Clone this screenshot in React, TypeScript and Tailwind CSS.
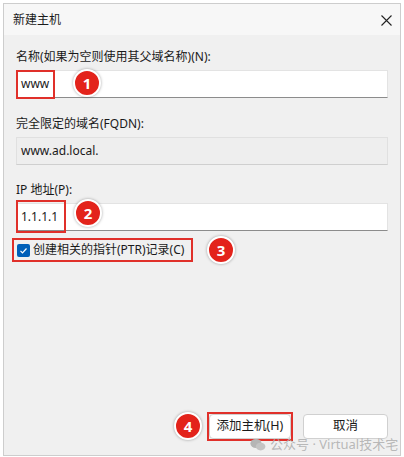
const font = "font-['Noto_Sans','Noto_Sans_CJK_SC',sans-serif]";

function Badge({ n, className }: { n: number; className: string }) {
  return (
    <div
      className={`absolute flex h-[28px] w-[28px] items-center justify-center rounded-full border-2 border-white bg-[#e3231b] text-[15px] font-bold text-white shadow-[0_0_3px_rgba(0,0,0,0.35)] ${className}`}
    >
      {n}
    </div>
  );
}

function Label({ children, className = "" }: { children: React.ReactNode; className?: string }) {
  return <div className={`h-[18px] text-[12px] leading-[18px] text-[#1a1a1a] ${className}`}>{children}</div>;
}

export default function App() {
  return (
    <div className={`h-[457px] w-[404px] bg-white pt-[3px] pl-[3px] ${font}`}>
      <div className="relative flex h-[453px] w-[398px] flex-col border border-[#cdcdcd] bg-[#f0f0f0]">
        {/* title bar */}
        <div className="flex h-[31px] items-center justify-between bg-[#f7f7f7] pl-[9px] pr-[8px]">
          <span className="text-[12px] text-[#1a1a1a]">新建主机</span>
          <svg width="11" height="11" viewBox="0 0 11 11" className="mt-[1px]">
            <path d="M0.5 0.5l10 10M10.5 0.5l-10 10" stroke="#222" strokeWidth="1.1" />
          </svg>
        </div>

        <div className="flex flex-1 flex-col pl-[12px]">
          <Label className="mt-[13px]">名称(如果为空则使用其父域名称)(N):</Label>
          <div className="relative mt-[4px] flex h-[28px] w-[372px] items-center border border-[#e3e3e3] border-b-[#8c8c8c] bg-white pl-[4px] text-[12px] text-[#1a1a1a]">
            www
            <div className="absolute left-[-1px] top-[-1px] h-[29px] w-[39px] border-2 border-[#e0302a]" />
            <Badge n={1} className="left-[56px] top-[-2px]" />
          </div>

          <Label className="mt-[17px]">完全限定的域名(FQDN):</Label>
          <div className="mt-[4px] flex h-[28px] w-[372px] items-center border border-[#e0e0e0] border-b-[#cfcfcf] bg-[#eeeeee] pl-[4px] text-[12px] text-[#1a1a1a]">
            www.ad.local.
          </div>

          <Label className="mt-[16px]">IP 地址(P):</Label>
          <div className="relative mt-[4px] flex h-[28px] w-[372px] items-center border border-[#e3e3e3] border-b-[#8c8c8c] bg-white pl-[4px] text-[12px] text-[#1a1a1a]">
            1.1.1.1
            <div className="absolute left-[-1px] top-[-4px] h-[33px] w-[50px] border-2 border-[#e0302a]" />
            <Badge n={2} className="left-[57px] top-[-5px]" />
          </div>

          <div className="relative mt-[8px] flex h-[22px] items-center">
            <div className="absolute left-[-4px] top-[-1px] h-[24px] w-[181px] border-2 border-[#e0302a]" />
            <div className="ml-[1px] flex h-[13px] w-[13px] items-center justify-center rounded-[2px] bg-[#005fb8]">
              <svg width="9" height="9" viewBox="0 0 9 9">
                <path d="M1.5 4.8l2 2 4-4.3" stroke="white" strokeWidth="1.2" fill="none" />
              </svg>
            </div>
            <span className="ml-[3px] text-[12px] text-[#1a1a1a]">创建相关的指针(PTR)记录(C)</span>
            <Badge n={3} className="left-[191px] top-[-3px]" />
          </div>

          <div className="flex-1" />

          <div className="relative mb-[16px] flex items-center pl-[193px]">
            <Badge n={4} className="left-[158px] top-[-2px]" />
            <div className="relative flex h-[25px] w-[82px] items-center justify-center rounded-[4px] border border-[#d0d0d0] bg-white text-[12.5px] text-[#1a1a1a]">
              添加主机(H)
              <div className="absolute left-[-3px] top-[-3px] h-[29px] w-[86px] border-2 border-[#e0302a]" />
            </div>
            <div className="ml-[12px] flex h-[25px] w-[85px] items-center justify-center rounded-[4px] border border-[#d0d0d0] bg-white text-[12.5px] text-[#1a1a1a]">
              取消
            </div>
          </div>
        </div>

        {/* watermark */}
        <div className="absolute left-[246px] top-[431px] flex items-center gap-[4px] text-[13px] text-[#b0b0b0]/90">
          <svg width="16" height="14" viewBox="0 0 16 14" fill="#b5b5b5">
            <ellipse cx="6" cy="5.5" rx="5.6" ry="4.6" />
            <ellipse cx="10.6" cy="8.6" rx="4.8" ry="3.9" fill="#c4c4c4" />
          </svg>
          <span>公众号 · Virtual技术宅</span>
        </div>
      </div>
    </div>
  );
}
